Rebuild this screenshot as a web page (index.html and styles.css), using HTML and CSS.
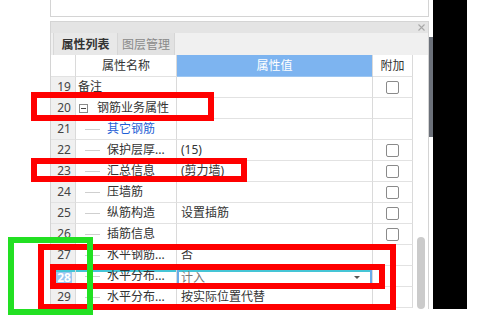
FILE: index.html
```html
<!DOCTYPE html>
<html lang="zh">
<head>
<meta charset="utf-8">
<title>属性列表</title>
<link rel="stylesheet" href="styles.css">
</head>
<body>
<div class="screen">
  <div class="left-gap"></div>
  <div class="panel">
    <div class="top-box"></div>
    <div class="main">
      <div class="title-strip">
        <svg class="close" width="7" height="7" viewBox="0 0 7 7"><path d="M0.5 0.5 L6.5 6.5 M6.5 0.5 L0.5 6.5" stroke="#a8a8a8" stroke-width="1.1" fill="none"/></svg>
      </div>
      <div class="tabs">
        <div class="tab active">属性列表</div>
        <div class="tab">图层管理</div>
      </div>
      <div class="grid-area">
        <div class="table">
          <div class="row head">
            <div class="c num"></div>
            <div class="c name">属性名称</div>
            <div class="c val">属性值</div>
            <div class="c add">附加</div>
          </div>
          <div class="row">
            <div class="c num">19</div>
            <div class="c name">备注</div>
            <div class="c val"></div>
            <div class="c add"><span class="cb"></span></div>
          </div>
          <div class="row">
            <div class="c num">20</div>
            <div class="c name"><span class="minus"></span>钢筋业务属性</div>
            <div class="c val"></div>
            <div class="c add"></div>
          </div>
          <div class="row">
            <div class="c num">21</div>
            <div class="c name"><span class="tl"></span><span class="link">其它钢筋</span></div>
            <div class="c val"></div>
            <div class="c add"></div>
          </div>
          <div class="row">
            <div class="c num">22</div>
            <div class="c name"><span class="tl"></span>保护层厚...</div>
            <div class="c val">(15)</div>
            <div class="c add"><span class="cb"></span></div>
          </div>
          <div class="row">
            <div class="c num">23</div>
            <div class="c name"><span class="tl"></span>汇总信息</div>
            <div class="c val">(剪力墙)</div>
            <div class="c add"><span class="cb"></span></div>
          </div>
          <div class="row">
            <div class="c num">24</div>
            <div class="c name"><span class="tl"></span>压墙筋</div>
            <div class="c val"></div>
            <div class="c add"><span class="cb"></span></div>
          </div>
          <div class="row">
            <div class="c num">25</div>
            <div class="c name"><span class="tl"></span>纵筋构造</div>
            <div class="c val">设置插筋</div>
            <div class="c add"><span class="cb"></span></div>
          </div>
          <div class="row">
            <div class="c num">26</div>
            <div class="c name"><span class="tl"></span>插筋信息</div>
            <div class="c val"></div>
            <div class="c add"><span class="cb"></span></div>
          </div>
          <div class="row">
            <div class="c num">27</div>
            <div class="c name"><span class="tl"></span>水平钢筋...</div>
            <div class="c val">否</div>
            <div class="c add"></div>
          </div>
          <div class="row sel">
            <div class="c num"><span class="num-sel">28</span></div>
            <div class="c name"><span class="tl"></span>水平分布...</div>
            <div class="c val"><div class="editor"><span class="editor-text">计入</span><span class="arrow"></span></div></div>
            <div class="c add"></div>
          </div>
          <div class="row">
            <div class="c num">29</div>
            <div class="c name"><span class="tl"></span>水平分布...</div>
            <div class="c val">按实际位置代替</div>
            <div class="c add"></div>
          </div>
        </div>
        <div class="vscroll"><div class="thumb"></div></div>
      </div>
    </div>
  </div>
  <div class="edge"><div class="edge-bar"></div></div>
  <div class="black"></div>
</div>

<div class="mark red r1"></div>
<div class="mark red r2"></div>
<div class="mark red r3"></div>
<div class="mark red r4"></div>
<div class="mark green g1"></div>
</body>
</html>
```
FILE: styles.css
```css
* {
  box-sizing: border-box;
  margin: 0;
  padding: 0;
}

body {
  margin: 0;
  width: 478px;
  height: 319px;
  overflow: hidden;
  position: relative;
  background: #fff;
  font-family: "Noto Sans", "Noto Sans CJK SC", sans-serif;
  font-size: 12px;
  color: #333;
}

.screen {
  display: flex;
  height: 309px;
}

.left-gap {
  width: 50px;
  flex: none;
}

.panel {
  width: 379px;
  flex: none;
  display: flex;
  flex-direction: column;
}

.top-box {
  height: 17px;
  flex: none;
  border: 1px solid #d4d4d4;
  border-top: none;
  background: #fff;
}

.main {
  margin-top: 4px;
  flex: 1;
  display: flex;
  flex-direction: column;
  border: 1px solid #d4d4d4;
  border-bottom: none;
}

.title-strip {
  height: 11px;
  flex: none;
  background: #e4e4e4;
  display: flex;
  justify-content: flex-end;
  align-items: flex-start;
  padding-top: 2px;
  padding-right: 3px;
}

.close {
  display: block;
}

.tabs {
  height: 22px;
  flex: none;
  display: flex;
  background: #f0f0f0;
  padding-left: 2px;
}

.tab {
  display: flex;
  align-items: center;
  justify-content: center;
  height: 22px;
  font-size: 12px;
  color: #8a8a8a;
  background: #e2e2e2;
  width: 57px;
  border-right: 1px solid #d6d6d6;
}

.tab.active {
  width: 65px;
  color: #333;
  font-weight: bold;
  background: #e8e8e8;
  border-left: 1px solid #d8d8d8;
}

.grid-area {
  flex: 1;
  display: flex;
}

.table {
  width: 362px;
  flex: none;
}

.row {
  display: grid;
  grid-template-columns: 25px 101px 196px 40px;
  height: 21px;
}

.row.head {
  height: 22px;
}

.c {
  border-right: 1px solid #dadada;
  border-bottom: 1px solid #e2e2e2;
  display: flex;
  align-items: center;
  white-space: nowrap;
  overflow: hidden;
  line-height: 20px;
}

.num {
  background: #f0f0f0;
  justify-content: center;
  padding-left: 2px;
  color: #444;
}

.head .num {
  background: #fff;
}

.name {
  padding-left: 2px;
}

.head .name {
  justify-content: center;
  padding-left: 0;
}

.val {
  padding-left: 4px;
}

.head .val {
  background: #7db4f0;
  color: #fff;
  justify-content: center;
  padding-left: 0;
  border-bottom-color: #9cc6f2;
}

.add {
  justify-content: center;
}

.cb {
  display: block;
  width: 13px;
  height: 13px;
  border: 1px solid #8a8a8a;
  border-radius: 2px;
  background: #fff;
}

.minus {
  display: block;
  position: relative;
  width: 9px;
  height: 9px;
  border: 1px solid #8a8a8a;
  margin-left: 1px;
  margin-right: 9px;
  flex: none;
}

.minus::after {
  content: "";
  position: absolute;
  left: 1px;
  top: 3px;
  width: 5px;
  height: 1px;
  background: #444;
}

.tl {
  display: block;
  flex: none;
  width: 15px;
  height: 1px;
  background: #cfcfcf;
  margin-left: 7px;
  margin-right: 7px;
}

.link {
  color: #1f5fd6;
}

/* selected row 28 */
.sel .num {
  background: linear-gradient(#45c5d6, #45c5d6) 0 4px / 100% 2px no-repeat, #f0f0f0;
}

.sel .name,
.sel .val {
  background: linear-gradient(#45c5d6, #45c5d6) 0 4px / 100% 2px no-repeat, #fff;
}

.num-sel {
  background: #99c6ef;
  color: #fff;
  font-weight: bold;
  line-height: 12px;
  padding: 0 1px;
  margin-top: 3px;
}

.sel .val {
  padding-left: 0;
  align-items: flex-start;
}

.editor {
  margin-top: 4px;
  height: 15px;
  width: 100%;
  display: flex;
  align-items: center;
  border-left: 2px solid #6aaae8;
  border-right: 2px solid #6aaae8;
  padding-left: 2px;
  color: #777;
}

.editor-text {
  line-height: 14px;
}

.arrow {
  margin-left: auto;
  margin-right: 10px;
  width: 0;
  height: 0;
  border-left: 3px solid transparent;
  border-right: 3px solid transparent;
  border-top: 3px solid #555;
}

.vscroll {
  width: 15px;
  flex: none;
  padding-left: 4px;
  padding-top: 182px;
}

.thumb {
  width: 8px;
  height: 72px;
  border-radius: 4px;
  background: #cbcbcb;
}

.edge {
  width: 4px;
  flex: none;
}

.edge-bar {
  margin-top: 37px;
  height: 100px;
  background: #6b7079;
}

.black {
  width: 34px;
  flex: none;
  background: #000;
}

/* annotation frames drawn over the screenshot */
.mark {
  position: absolute;
  border: 6px solid #ff0000;
}

.red {
  border-color: #ff0000;
}

.green {
  border-color: #22e022;
  z-index: 2;
}

.r1 { left: 31px; top: 92px; width: 183px; height: 29px; }
.r2 { left: 31px; top: 158px; width: 216px; height: 24px; }
.r3 { left: 38px; top: 244px; width: 358px; height: 66px; }
.r4 { left: 50px; top: 264px; width: 335px; height: 25px; }
.g1 { left: 8px; top: 237px; width: 85px; height: 78px; }
```
